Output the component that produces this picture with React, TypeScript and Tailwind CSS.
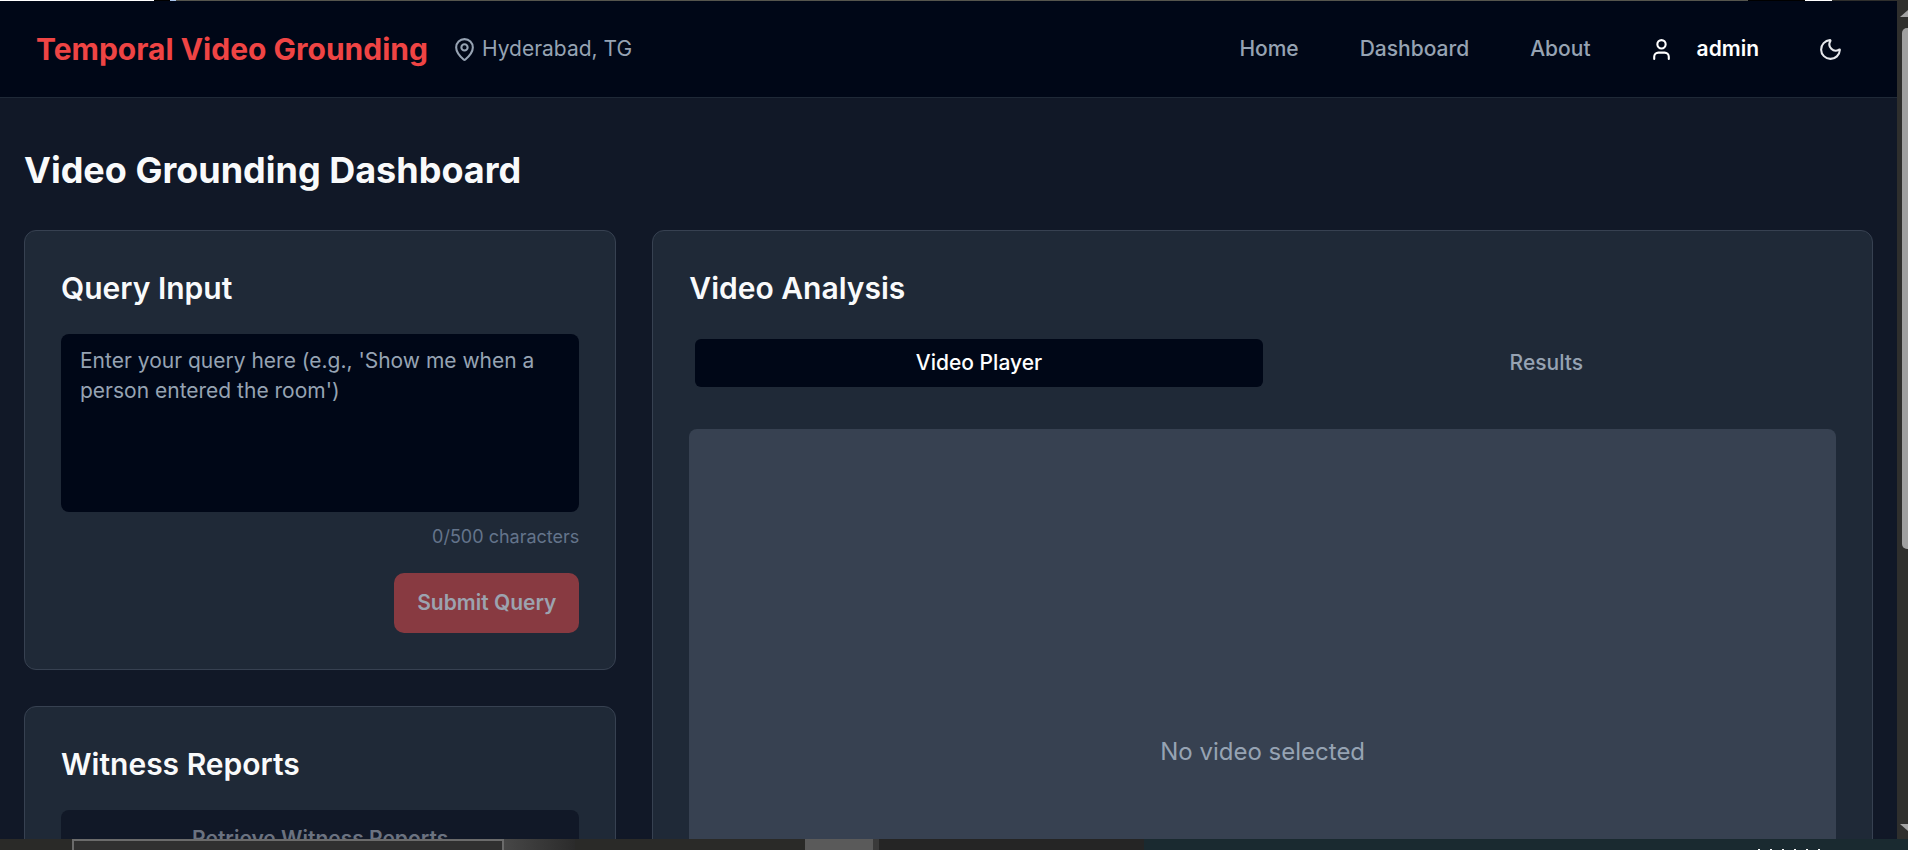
import { MapPin, Moon, User } from "lucide-react";

const navLinks = ["Home", "Dashboard", "About"];

function Navbar() {
  return (
    <header className="flex h-[97px] shrink-0 items-center justify-between border-b border-[#1f2937] bg-[#000717] pl-[36px] pr-[54px]">
      <div className="flex items-center">
        <span className="text-[30px] font-bold text-[#ef4444]">Temporal Video Grounding</span>
        <div className="ml-[24px] flex items-center gap-[5px] text-[21px] text-[#96a3b3]">
          <MapPin size={25} strokeWidth={2} />
          <span>Hyderabad, TG</span>
        </div>
      </div>
      <nav className="flex items-center text-[21px] font-medium">
        <div className="flex gap-[61px]">
          {navLinks.map((link) => (
            <a key={link} className="text-[#96a3b3]">
              {link}
            </a>
          ))}
        </div>
        <User size={25} className="ml-[58px] text-white" />
        <span className="ml-[23px] font-semibold text-white">admin</span>
        <Moon size={25} className="ml-[59px] text-[#e5e7eb]" />
      </nav>
    </header>
  );
}

function QueryCard() {
  return (
    <section className="rounded-[12px] border border-[#374151] bg-[#1f2937] p-[36px]">
      <h2 className="text-[30px] leading-[42px] font-semibold text-[#f9fafb]">Query Input</h2>
      <textarea
        readOnly
        placeholder="Enter your query here (e.g., 'Show me when a person entered the room')"
        className="mt-[25px] block h-[178px] w-full resize-none rounded-[8px] bg-[#000717] px-[19px] py-[12px] text-[21px] leading-[30px] placeholder:text-[#96a3b3]"
      />
      <p className="mt-[12px] text-right text-[18px] leading-[25px] text-[#64748b]">0/500 characters</p>
      <div className="mt-[24px] flex justify-end">
        <button className="h-[60px] w-[185px] rounded-[10px] bg-[#883a41] text-[21px] font-semibold text-[#9ca3af]">
          Submit Query
        </button>
      </div>
    </section>
  );
}

function WitnessCard() {
  return (
    <section className="rounded-[12px] border border-[#374151] bg-[#1f2937] p-[36px]">
      <h2 className="text-[30px] leading-[42px] font-semibold text-[#f9fafb]">Witness Reports</h2>
      <button className="mt-[25px] h-[58px] w-full rounded-[8px] bg-[#111827] text-[21px] font-semibold text-[#6b7280]">
        Retrieve Witness Reports
      </button>
    </section>
  );
}

function VideoCard() {
  return (
    <section className="col-span-2 rounded-[12px] border border-[#374151] bg-[#1f2937] p-[36px]">
      <h2 className="text-[30px] leading-[42px] font-semibold text-[#f9fafb]">Video Analysis</h2>
      <div className="mt-[25px] grid grid-cols-2 px-[6px] py-[5px]">
        <button className="h-[48px] rounded-[6px] bg-[#000717] text-[21px] font-medium text-white">Video Player</button>
        <button className="h-[48px] text-[21px] font-medium text-[#96a3b3]">Results</button>
      </div>
      <div className="mt-[37px] flex aspect-video items-center justify-center rounded-[8px] bg-[#374151] text-[24px] text-[#96a3b3]">
        No video selected
      </div>
    </section>
  );
}

function Scrollbar() {
  return (
    <div className="flex w-[11px] shrink-0 flex-col overflow-hidden bg-[#2f2f2d] pb-[8px] pt-[9px]">
      <div className="ml-[3px] h-0 w-0 border-x-[8px] border-b-[7px] border-x-transparent border-b-[#a3a3a3]" />
      <div className="ml-[5px] mt-[11px] h-[521px] w-[12px] shrink-0 rounded-[5px] bg-[#a0a0a0]" />
      <div className="ml-[3px] mt-auto h-0 w-0 border-x-[8px] border-t-[7px] border-x-transparent border-t-[#a3a3a3]" />
    </div>
  );
}

export default function App() {
  return (
    <div className="flex h-screen flex-col overflow-hidden bg-[#2f2f2d] [font-family:Inter,sans-serif]">
      {/* sliver of the desktop above the window */}
      <div className="flex h-px shrink-0 bg-[#55554d]">
        <div className="w-[154px] bg-white" />
        <div className="w-[16px] bg-black" />
        <div className="w-[6px] bg-[#a9c4ea]" />
        <div className="w-[1572px]" />
        <div className="w-[57px] bg-black" />
        <div className="w-[27px] bg-white" />
        <div className="flex-1 bg-[#2f2f2d]" />
      </div>
      <div className="flex min-h-0 flex-1">
        <div className="min-w-0 flex-1 overflow-hidden bg-[#111827]">
          <Navbar />
          <main className="px-[24px] pt-[50px]">
            <h1 className="text-[36px] leading-[45px] font-bold text-[#f9fafb]">Video Grounding Dashboard</h1>
            <div className="mt-[37px] grid grid-cols-3 items-start gap-[36px]">
              <div className="flex flex-col gap-[36px]">
                <QueryCard />
                <WitnessCard />
              </div>
              <VideoCard />
            </div>
          </main>
        </div>
        <Scrollbar />
      </div>
      {/* desktop taskbar sliver */}
      <div className="flex h-[11px] shrink-0 bg-[#1a2a30]">
        <div className="w-[72px] bg-[#2a2a28]" />
        <div className="w-[432px] border-x-2 border-t-2 border-[#6b6b6b] bg-[#303030]" />
        <div className="w-[71px] bg-gradient-to-r from-[#474747] to-[#2b2b2b]" />
        <div className="w-[230px] bg-[#2a2a28]" />
        <div className="w-[68px] bg-[#5a5a5a]" />
        <div className="w-[6px] bg-[#3a3a3a]" />
        <div className="w-[265px] bg-[#252525]" />
        <div className="ml-[614px] flex items-end gap-[10px]">
          <div className="h-px w-[2px] bg-white" />
          <div className="h-px w-[2px] bg-white" />
          <div className="h-px w-[2px] bg-white" />
          <div className="h-px w-[2px] bg-white" />
          <div className="h-px w-[2px] bg-white" />
          <div className="h-px w-[2px] bg-white" />
        </div>
      </div>
    </div>
  );
}
